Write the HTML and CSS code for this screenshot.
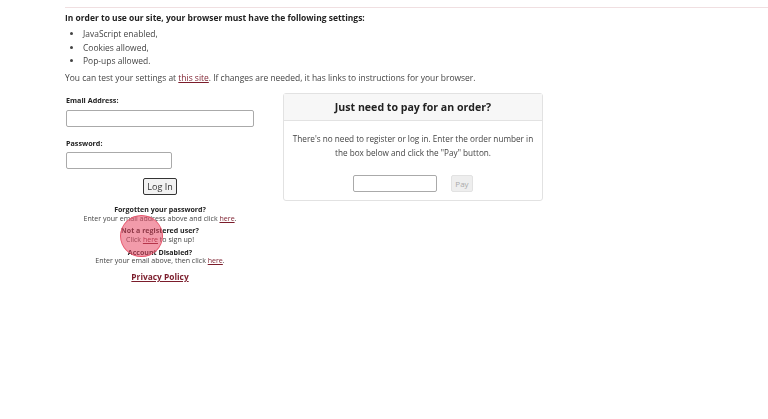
FILE: index.html
```html
<!DOCTYPE html>
<html lang="en">

<head>
    <meta charset="UTF-8">
    <meta name="viewport" content="width=device-width, initial-scale=1.0">
    <title>Log In</title>
    <link rel="stylesheet" href="styles.css">
</head>

<body>
    <main class="page">
        <p class="requirements-title">In order to use our site, your browser must have the following settings:</p>
        <ul class="requirements">
            <li>JavaScript enabled,</li>
            <li>Cookies allowed,</li>
            <li>Pop-ups allowed.</li>
        </ul>
        <p class="test-note">You can test your settings at <a href="#">this site</a>. If changes are needed, it has links to instructions for your browser.</p>

        <div class="columns">
            <form class="login">
                <label for="email">Email Address:</label>
                <input type="text" id="email" class="email-input">
                <label for="password">Password:</label>
                <input type="password" id="password" class="password-input">
                <div class="login-button"><button type="button">Log In</button></div>
                <div class="help">
                    <strong>Forgotten your password?</strong>
                    <span>Enter your email address above and click <a href="#">here</a>.</span>
                </div>
                <div class="help">
                    <strong>Not a registered user?</strong>
                    <span>Click <a href="#">here</a> to sign up!</span>
                </div>
                <div class="help help-tight">
                    <strong>Account Disabled?</strong>
                    <span>Enter your email above, then click <a href="#">here</a>.</span>
                </div>
                <a class="privacy" href="#">Privacy Policy</a>
                <div class="click-marker"></div>
            </form>

            <section class="pay-card">
                <h2>Just need to pay for an order?</h2>
                <div class="pay-body">
                    <p>There's no need to register or log in. Enter the order number in the box below and click the "Pay" button.</p>
                    <div class="pay-row">
                        <input type="text" class="order-input">
                        <button type="button" class="pay-button" disabled>Pay</button>
                    </div>
                </div>
            </section>
        </div>
    </main>
</body>

</html>
```

FILE: styles.css
```css
body {
    margin: 0;
    background-color: #fff;
    color: #444;
    font-family: "Open Sans", Arial, sans-serif;
    font-size: 8.46px;
    line-height: 13px;
}

a {
    color: #7b1c2b;
}

.page {
    margin-left: 65px;
    padding-top: 7px;
    filter: blur(0.3px);
}

.requirements-title {
    margin: 0;
    padding-top: 3px;
    border-top: 1px solid #f0dfe1;
    font-weight: 700;
    color: #222;
}

.requirements {
    margin: 3px 0 0;
    padding-left: 18px;
}

.requirements li {
    height: 13.5px;
}

.test-note {
    margin: 3px 0 0;
}

.columns {
    display: flex;
    align-items: flex-start;
    margin-top: 9.5px;
}

.login {
    position: relative;
    display: flex;
    flex-direction: column;
    width: 190px;
    margin-right: 28px;
    padding-top: 1px;
}

label {
    margin-left: 1px;
    font-size: 7.2px;
    line-height: 12px;
    font-weight: 700;
    color: #222;
}

input {
    box-sizing: border-box;
    height: 17px;
    border: 1px solid #aaa;
    border-radius: 2px;
    background-color: #fff;
}

.email-input {
    width: 188px;
    margin: 4px 0 10px 1px;
}

.password-input {
    width: 106px;
    margin: 3px 0 0 1px;
}

.login-button {
    margin-top: 9px;
    height: 17px;
    text-align: center;
}

.login-button button {
    display: inline-block;
    box-sizing: border-box;
    width: 34px;
    height: 17px;
    padding: 0;
    border: 1px solid #333;
    border-radius: 2px;
    background-color: #f2f2f2;
    color: #333;
    font-family: inherit;
    font-size: 9px;
}

.help {
    display: flex;
    flex-direction: column;
    align-items: center;
    margin-top: 9.5px;
    font-size: 7.05px;
    line-height: 9px;
}

.help + .help {
    margin-top: 3px;
}

.help + .help-tight {
    margin-top: 4.5px;
    line-height: 8px;
}

.help strong {
    color: #222;
}

.privacy {
    margin-top: 6px;
    text-align: center;
    font-size: 8.4px;
    font-weight: 700;
}

.click-marker {
    position: absolute;
    left: 55px;
    top: 122px;
    width: 43px;
    height: 42px;
    border: 1px solid #e8596f;
    border-radius: 50%;
    box-sizing: border-box;
    background-color: rgba(232, 72, 100, 0.55);
}

.pay-card {
    box-sizing: border-box;
    width: 260px;
    border: 1px solid #e2e2e2;
    border-radius: 3px;
}

.pay-card h2 {
    margin: 0;
    padding: 6px 0;
    border-bottom: 1px solid #e2e2e2;
    background-color: #f7f7f7;
    text-align: center;
    font-size: 10.6px;
    line-height: 14px;
    font-weight: 700;
    color: #222;
}

.pay-body {
    padding: 11px 6px 8px;
    text-align: center;
}

.pay-body p {
    margin: 0;
    font-size: 8.2px;
    line-height: 14px;
}

.pay-row {
    display: flex;
    align-items: center;
    justify-content: center;
    gap: 14px;
    margin-top: 15px;
}

.order-input {
    width: 84px;
}

.pay-button {
    box-sizing: border-box;
    width: 22px;
    height: 17px;
    padding: 0;
    border: 1px solid #e2e2e2;
    border-radius: 2px;
    background-color: #eee;
    color: #aaa;
    font-family: inherit;
    font-size: 8px;
}
```
